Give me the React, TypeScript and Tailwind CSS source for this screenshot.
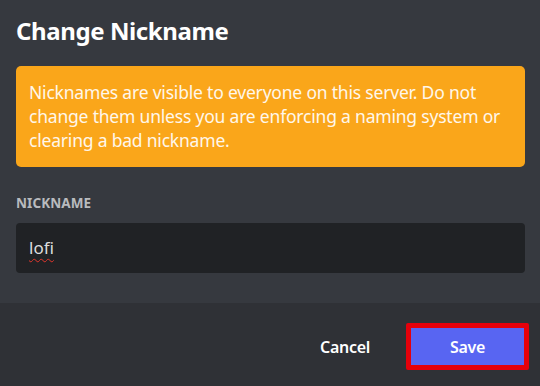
export default function App() {
  const font = { fontFamily: '"Noto Sans", "Open Sans", Arial, sans-serif' };
  return (
    <div className="w-[540px] h-[386px] bg-[#36393f] flex flex-col overflow-hidden" style={font}>
      <div className="px-4 pt-[14px]">
        <h1 className="text-[24px] leading-[34px] font-bold text-white tracking-[-0.4px]">Change Nickname</h1>
        <div className="mt-[18px] w-[509px] h-[101px] rounded-[5px] bg-[#faa61a] px-[13px] py-[14px] text-[17.5px] leading-[24px] text-[#fff7ea] tracking-[-0.2px] whitespace-nowrap">
          Nicknames are visible to everyone on this server. Do not
          <br />
          change them unless you are enforcing a naming system or
          <br />
          clearing a bad nickname.
        </div>
        <div className="mt-[28px] text-[13.5px] leading-[17px] font-bold text-[#b9bbbe] tracking-[0.1px]">NICKNAME</div>
        <div className="mt-[11px] w-[509px] h-[50px] rounded-[4px] bg-[#202225] flex items-center px-[13px]">
          <span className="text-[17px] text-[#dcddde] underline decoration-wavy decoration-[#e0352b] decoration-1 underline-offset-[4px]">lofi</span>
        </div>
      </div>
      <div className="mt-[30px] flex-1 bg-[#2f3136] flex items-center justify-end pr-[11px] pt-[4px]">
        <button className="text-[16px] font-semibold text-white mr-[36px] tracking-[-0.3px]">Cancel</button>
        <div className="border-[5px] border-[#e5000b] rounded-[2px]">
          <button className="w-[113px] h-[37px] bg-[#5865f2] text-white text-[16px] font-semibold tracking-[-0.3px]">Save</button>
        </div>
      </div>
    </div>
  );
}
